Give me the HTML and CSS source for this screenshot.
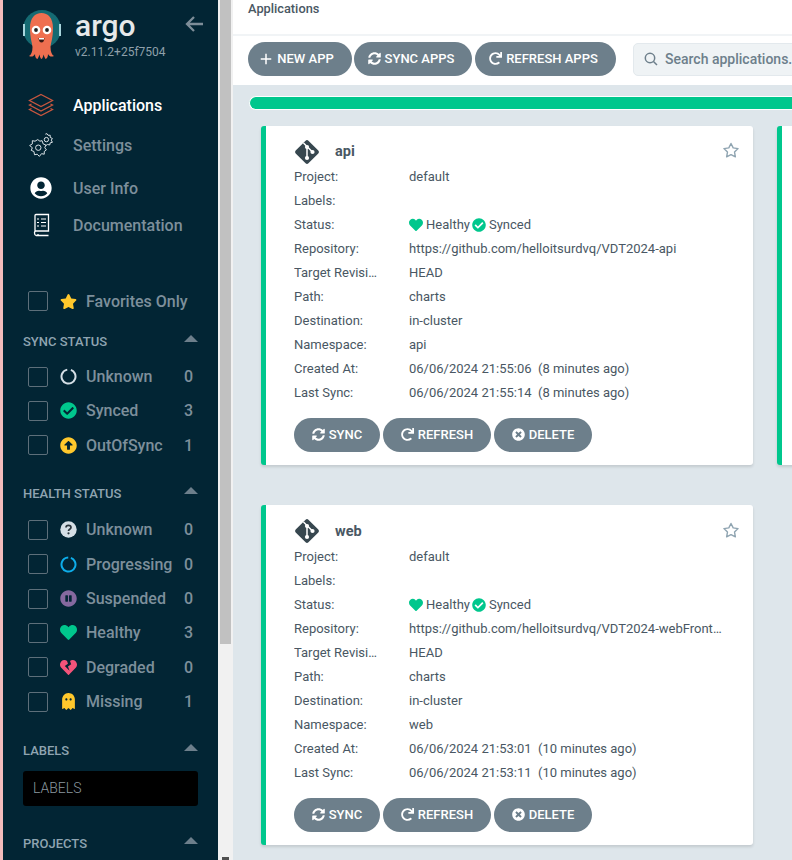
FILE: index.html
```html
<!DOCTYPE html>
<html lang="en">
<head>
  <meta charset="UTF-8">
  <meta name="viewport" content="width=device-width, initial-scale=1">
  <title>Applications - Argo CD</title>
  <link rel="stylesheet" href="styles.css">
</head>
<body>
  <svg class="sprite" xmlns="http://www.w3.org/2000/svg">
    <symbol id="i-heart" viewBox="0 0 512 512"><path d="M462.3 62.6C407.5 15.9 326 24.3 275.7 76.2L256 96.5l-19.7-20.3C186.1 24.3 104.5 15.9 49.7 62.6c-62.8 53.6-66.1 149.8-9.9 207.9l193.5 199.8c12.5 12.9 32.8 12.9 45.3 0l193.5-199.8c56.3-58.1 53-154.3-9.8-207.9z"/></symbol>
    <symbol id="i-star" viewBox="0 0 576 512"><path d="M259.3 17.8L194 150.2 47.9 171.5c-26.2 3.8-36.7 36.1-17.7 54.6l105.7 103-25 145.5c-4.5 26.3 23.2 46 46.4 33.7L288 439.6l130.7 68.7c23.2 12.2 50.9-7.4 46.4-33.7l-25-145.5 105.7-103c19-18.5 8.5-50.8-17.7-54.6L382 150.2 316.7 17.8c-11.7-23.6-45.6-23.9-57.4 0z"/></symbol>
    <symbol id="i-check" viewBox="0 0 512 512"><path d="M504 256c0 136.967-111.033 248-248 248S8 392.967 8 256 119.033 8 256 8s248 111.033 248 248zM227.314 387.314l184-184c6.248-6.248 6.248-16.379 0-22.627l-22.627-22.627c-6.248-6.249-16.379-6.25-22.628 0L216 308.118l-70.059-70.059c-6.248-6.248-16.379-6.248-22.628 0l-22.627 22.627c-6.248 6.248-6.248 16.379 0 22.627l104 104c6.249 6.249 16.379 6.249 22.628.001z"/></symbol>
    <symbol id="i-up" viewBox="0 0 512 512"><path d="M8 256C8 119 119 8 256 8s248 111 248 248-111 248-248 248S8 393 8 256zm292 116V256h70.9c10.7 0 16.1-13 8.5-20.5L264.5 121.2c-4.7-4.7-12.2-4.7-16.9 0l-115 114.3c-7.6 7.6-2.2 20.5 8.5 20.5H212v116c0 6.6 5.4 12 12 12h64c6.6 0 12-5.4 12-12z"/></symbol>
    <symbol id="i-question" viewBox="0 0 17 17">
      <circle cx="8.500" cy="8.500" r="8.200" fill="#d5dfe6"/>
      <path d="M6 6.600C6 5 7.200 4.300 8.500 4.300S11 5.100 11 6.500C11 8.300 8.500 8.300 8.500 10" fill="none" stroke="#29343b" stroke-width="1.700"/>
      <circle cx="8.500" cy="12.300" r="1.100" fill="#29343b"/>
    </symbol>
    <symbol id="i-pause" viewBox="0 0 512 512"><path d="M256 8C119 8 8 119 8 256s111 248 248 248 248-111 248-248S393 8 256 8zm-16 328c0 8.800-7.200 16-16 16h-48c-8.800 0-16-7.200-16-16V176c0-8.800 7.200-16 16-16h48c8.800 0 16 7.200 16 16v160zm112 0c0 8.800-7.200 16-16 16h-48c-8.800 0-16-7.200-16-16V176c0-8.800 7.200-16 16-16h48c8.800 0 16 7.200 16 16v160z"/></symbol>
    <symbol id="i-broken" viewBox="0 0 512 512"><path d="M473.7 73.8l-2.4-2.5c-46-47-118-51.7-169.6-14.8L336 159.9l-96 64 48 128-144-144 96-64-28.6-86.5C159.7 19.6 87 24 40.7 71.4l-2.4 2.4C-10.4 123.6-12.5 202.9 31 256l212.1 218.6c7.1 7.3 18.6 7.3 25.7 0L481 255.9c43.5-53 41.4-132.3-7.3-182.1z"/></symbol>
    <symbol id="i-ghost" viewBox="0 0 384 512"><path d="M186.1.09C81.01 3.24 0 94.92 0 200.05v263.92c0 14.26 17.23 21.39 27.31 11.31l24.92-18.53c6.66-4.95 16-3.99 21.51 2.21l42.95 48.35c6.25 6.25 16.38 6.25 22.63 0l40.72-45.85c6.37-7.17 17.56-7.17 23.92 0l40.72 45.85c6.25 6.25 16.38 6.25 22.63 0l42.95-48.35c5.51-6.2 14.85-7.17 21.51-2.21l24.92 18.53c10.08 10.08 27.31 2.95 27.31-11.31V192C384 84 294.83-3.17 186.1.09zM128 224c-17.67 0-32-14.33-32-32s14.33-32 32-32 32 14.33 32 32-14.33 32-32 32zm128 0c-17.67 0-32-14.33-32-32s14.33-32 32-32 32 14.33 32 32-14.33 32-32 32z"/></symbol>
    <symbol id="i-sync" viewBox="0 0 512 512"><path d="M370.72 133.28C339.458 104.008 298.888 87.962 255.848 88c-77.458.068-144.328 53.178-162.791 126.85-1.344 5.363-6.122 9.15-11.651 9.15H24.103c-7.498 0-13.194-6.807-11.807-14.176C33.933 94.924 134.813 8 256 8c66.448 0 126.791 26.136 171.315 68.685L463.03 40.97C478.149 25.851 504 36.559 504 57.941V192c0 13.255-10.745 24-24 24H345.941c-21.382 0-32.09-25.851-16.971-40.971l41.75-41.749zM32 296h134.059c21.382 0 32.09 25.851 16.971 40.971l-41.75 41.75c31.262 29.273 71.835 45.319 114.876 45.28 77.418-.07 144.315-53.144 162.787-126.849 1.344-5.363 6.122-9.15 11.651-9.15h57.304c7.498 0 13.194 6.807 11.807 14.176C478.067 417.076 377.187 504 256 504c-66.448 0-126.791-26.136-171.315-68.685L48.97 471.03C33.851 486.149 8 475.441 8 454.059V320c0-13.255 10.745-24 24-24z"/></symbol>
    <symbol id="i-redo" viewBox="0 0 512 512"><path d="M500.33 0h-47.41a12 12 0 0 0-12 12.57l4 82.76A247.42 247.42 0 0 0 256 8C119.34 8 7.9 119.53 8 256.19 8.1 393.07 119.1 504 256 504a247.1 247.1 0 0 0 166.18-63.91 12 12 0 0 0 .48-17.43l-34-34a12 12 0 0 0-16.38-.55A176 176 0 1 1 402.1 157.8l-101.53-4.87a12 12 0 0 0-12.57 12v47.41a12 12 0 0 0 12 12h200.33a12 12 0 0 0 12-12V12a12 12 0 0 0-12-12z"/></symbol>
    <symbol id="i-times" viewBox="0 0 512 512"><path d="M256 8C119 8 8 119 8 256s111 248 248 248 248-111 248-248S393 8 256 8zm121.6 313.1c4.7 4.7 4.7 12.3 0 17L338 377.6c-4.7 4.7-12.3 4.7-17 0L256 312l-65.1 65.6c-4.7 4.7-12.3 4.7-17 0L134.4 338c-4.7-4.7-4.7-12.3 0-17l65.6-65-65.6-65.1c-4.7-4.7-4.7-12.3 0-17l39.6-39.6c4.7-4.7 12.3-4.7 17 0l65 65.7 65.1-65.6c4.7-4.7 12.3-4.7 17 0l39.6 39.6c4.7 4.7 4.7 12.3 0 17L312 256l65.6 65.1z"/></symbol>
    <symbol id="i-plus" viewBox="0 0 24 24"><path d="M12 1.500V22.500M1.500 12H22.500" fill="none" stroke="#fff" stroke-width="3"/></symbol>
    <symbol id="i-user" viewBox="0 0 496 512"><path d="M248 8C111 8 0 119 0 256s111 248 248 248 248-111 248-248S385 8 248 8zm0 96c48.6 0 88 39.4 88 88s-39.4 88-88 88-88-39.4-88-88 39.4-88 88-88zm0 344c-58.7 0-111.3-26.6-146.5-68.2 18.8-35.4 55.6-59.8 98.5-59.8 2.4 0 4.8.4 7.1 1.1 13 4.2 26.6 6.9 40.9 6.9 14.3 0 28-2.7 40.9-6.9 2.3-.7 4.7-1.1 7.1-1.1 42.9 0 79.7 24.4 98.5 59.8C359.3 421.4 306.7 448 248 448z"/></symbol>
    <symbol id="i-git" viewBox="0 0 26 26">
      <rect x="4" y="4" width="18" height="18" rx="2" transform="rotate(45 13 13)"/>
      <path d="M9.500 4 L18.500 13 M13 7.500 V19" fill="none" stroke="#fff" stroke-width="1.500"/>
      <circle cx="13" cy="8" r="2.100" fill="#fff"/><circle cx="13" cy="19" r="2.100" fill="#fff"/><circle cx="18.500" cy="13" r="2.100" fill="#fff"/>
    </symbol>
  </svg>

  <div class="app">
    <div class="strip"></div>

    <aside class="sidebar">
      <div class="brand">
        <svg class="brand-logo" viewBox="0 0 40 60">
          <circle cx="20" cy="20" r="19" fill="#156a72"/>
          <rect x="1" y="15" width="2" height="12" fill="#a9d6dd"/>
          <rect x="37" y="15" width="2" height="12" fill="#a9d6dd"/>
          <path d="M8 19C8 9 13 4 19.500 4S31 9 31 19C31 29 29 33 28.500 38C28.500 43 30 46 32 47C29 48.500 27 47 26 45C26 48 25 49.500 23.500 50C22.500 48.500 22 47 21.500 45.500C21 48 20.500 49.500 19.500 50C18.500 49.500 18 48 17.500 45.500C17 47 16.500 48.500 15.500 50C14 49.500 13 48 13 45C12 47 10 48.500 7 47C9 46 10.500 43 10.500 38C10 33 8 29 8 19Z" fill="#ef6f50"/>
          <circle cx="14" cy="21" r="4.300" fill="#fff"/><circle cx="25" cy="21" r="4.300" fill="#fff"/>
          <circle cx="14" cy="21" r="1.900" fill="#222"/><circle cx="25" cy="21" r="1.900" fill="#222"/>
          <path d="M16.500 29H22.500Q22 33.500 19.500 33.500T16.500 29Z" fill="#3a1a14"/>
          <path d="M17 29H22V30.500H17Z" fill="#fff"/>
        </svg>
        <div class="brand-text">
          <div class="brand-name">argo</div>
          <div class="brand-version">v2.11.2+25f7504</div>
        </div>
        <svg class="brand-back" viewBox="0 0 18 16"><path d="M18 8H2M9 1L2 8l7 7" fill="none" stroke="#7d8d98" stroke-width="2.300"/></svg>
      </div>

      <nav class="nav">
        <a class="nav-item nav-item--active">
          <span class="nav-icon">
            <svg width="26" height="24" viewBox="0 0 26 24" fill="none" stroke="#c9573f" stroke-width="1.300"><path d="M13 1.500L24.500 7.500L13 13.500L1.500 7.500Z"/><path d="M3.500 11L1.500 12L13 18L24.500 12L22.500 11"/><path d="M3.500 15.500L1.500 16.500L13 22.500L24.500 16.500L22.500 15.500"/></svg>
          </span>
          Applications
        </a>
        <a class="nav-item">
          <span class="nav-icon">
            <svg width="26" height="26" viewBox="0 0 24 24" fill="none" stroke="#dfe6ea" stroke-width=".9"><path d="M9 7L11 8.500L13 8L14 11L16.500 12L15.500 14.500L17 16.500L15 18L15 20.500L12.500 20L10.500 22.500L8.500 20.500L6 21L5.500 18L3 17L4 14.500L1.500 12.500L4 11L4 8L6.500 8.500Z"/><circle cx="9.500" cy="14.500" r="2.500"/><path d="M16 2L17.500 1.500L18.500 3L20.500 3L20.500 5L22.500 6L21.500 7.500L22.500 9.500L20.500 10L20 12L18 11.500L16.500 12.500"/><circle cx="17" cy="7" r="2"/></svg>
          </span>
          Settings
        </a>
        <a class="nav-item nav-item--user">
          <span class="nav-icon"><svg class="ico-white" width="22" height="22"><use href="#i-user"/></svg></span>
          User Info
        </a>
        <a class="nav-item nav-item--docs">
          <span class="nav-icon">
            <svg width="17" height="24" viewBox="0 0 17 24" fill="none" stroke="#fff" stroke-width="1.300"><path d="M2 19V2.500Q2 1.500 3 1.500H15.500V18H3Q1.500 18 1.500 20T3 22.500H15.500M5 21V23"/><path d="M8 6H13M8 9.500H13M8 13H13M4 6H6M4 9.500H6M4 13H6" stroke-width="1.100"/></svg>
          </span>
          Documentation
        </a>
      </nav>

      <label class="filter filter--favorites">
        <span class="checkbox"></span>
        <svg class="filter-icon ico-yellow"><use href="#i-star"/></svg>
        <span class="filter-name">Favorites Only</span>
      </label>

      <div class="section-title section-title--first">SYNC STATUS<span class="caret"></span></div>
      <div class="filters">
        <label class="filter">
          <span class="checkbox"></span>
          <svg class="filter-icon" viewBox="0 0 17 17" fill="none"><circle cx="8.500" cy="8.500" r="7" stroke="#d5dfe6" stroke-width="2" stroke-dasharray="40 4" transform="rotate(-70 8.500 8.500)"/></svg>
          <span class="filter-name">Unknown</span><span class="filter-count">0</span>
        </label>
        <label class="filter">
          <span class="checkbox"></span>
          <svg class="filter-icon ico-green"><use href="#i-check"/></svg>
          <span class="filter-name">Synced</span><span class="filter-count">3</span>
        </label>
        <label class="filter">
          <span class="checkbox"></span>
          <svg class="filter-icon ico-yellow"><use href="#i-up"/></svg>
          <span class="filter-name">OutOfSync</span><span class="filter-count">1</span>
        </label>
      </div>

      <div class="section-title">HEALTH STATUS<span class="caret"></span></div>
      <div class="filters">
        <label class="filter">
          <span class="checkbox"></span>
          <svg class="filter-icon"><use href="#i-question"/></svg>
          <span class="filter-name">Unknown</span><span class="filter-count">0</span>
        </label>
        <label class="filter">
          <span class="checkbox"></span>
          <svg class="filter-icon" viewBox="0 0 17 17" fill="none"><circle cx="8.500" cy="8.500" r="7" stroke="#0dadea" stroke-width="2" stroke-dasharray="41 3" transform="rotate(-70 8.500 8.500)"/></svg>
          <span class="filter-name">Progressing</span><span class="filter-count">0</span>
        </label>
        <label class="filter">
          <span class="checkbox"></span>
          <svg class="filter-icon ico-purple"><use href="#i-pause"/></svg>
          <span class="filter-name">Suspended</span><span class="filter-count">0</span>
        </label>
        <label class="filter">
          <span class="checkbox"></span>
          <svg class="filter-icon ico-green"><use href="#i-heart"/></svg>
          <span class="filter-name">Healthy</span><span class="filter-count">3</span>
        </label>
        <label class="filter">
          <span class="checkbox"></span>
          <svg class="filter-icon ico-red"><use href="#i-broken"/></svg>
          <span class="filter-name">Degraded</span><span class="filter-count">0</span>
        </label>
        <label class="filter">
          <span class="checkbox"></span>
          <svg class="filter-icon ico-yellow"><use href="#i-ghost"/></svg>
          <span class="filter-name">Missing</span><span class="filter-count">1</span>
        </label>
      </div>

      <div class="section-title section-title--labels">LABELS<span class="caret"></span></div>
      <div class="labels-input">LABELS</div>
      <div class="section-title section-title--projects">PROJECTS<span class="caret"></span></div>
    </aside>

    <div class="scrollbar"><div class="scrollbar-thumb"></div><div class="scrollbar-arrow"></div></div>

    <main class="main">
      <div class="page-title">Applications</div>
      <div class="toolbar">
        <button class="btn btn--new"><svg class="btn-icon"><use href="#i-plus"/></svg>NEW APP</button>
        <button class="btn btn--sync"><svg class="btn-icon"><use href="#i-sync"/></svg>SYNC APPS</button>
        <button class="btn btn--refresh"><svg class="btn-icon"><use href="#i-redo"/></svg>REFRESH APPS</button>
        <div class="search">
          <svg width="14" height="14" viewBox="0 0 14 14" fill="none" stroke="#6d7f8b" stroke-width="1.500"><circle cx="6" cy="6" r="4.700"/><path d="M9.500 9.500L13 13"/></svg>
          <span>Search applications...</span>
        </div>
      </div>

      <div class="content">
        <div class="progress"><div class="progress-fill"></div></div>
        <div class="cards">
          <section class="card">
            <header class="card-head">
              <svg class="card-git"><use href="#i-git"/></svg>
              <span class="card-title">api</span>
              <svg class="card-star" viewBox="0 0 576 512"><path d="M288 30L358 172L514 195L401 305L428 460L288 387L148 460L175 305L62 195L218 172Z" fill="none" stroke="#8fa4b1" stroke-width="44" stroke-linejoin="round"/></svg>
            </header>
            <div class="row"><span class="row-label">Project:</span><span class="row-value">default</span></div>
            <div class="row"><span class="row-label">Labels:</span><span class="row-value"></span></div>
            <div class="row"><span class="row-label">Status:</span><span class="row-value status"><svg class="status-icon ico-green"><use href="#i-heart"/></svg>Healthy<svg class="status-icon status-icon--sync ico-green"><use href="#i-check"/></svg>Synced</span></div>
            <div class="row"><span class="row-label">Repository:</span><span class="row-value">https://github.com/helloitsurdvq/VDT2024-api</span></div>
            <div class="row"><span class="row-label">Target Revision:</span><span class="row-value">HEAD</span></div>
            <div class="row"><span class="row-label">Path:</span><span class="row-value">charts</span></div>
            <div class="row"><span class="row-label">Destination:</span><span class="row-value">in-cluster</span></div>
            <div class="row"><span class="row-label">Namespace:</span><span class="row-value">api</span></div>
            <div class="row"><span class="row-label">Created At:</span><span class="row-value">06/06/2024 21:55:06&nbsp; (8 minutes ago)</span></div>
            <div class="row"><span class="row-label">Last Sync:</span><span class="row-value">06/06/2024 21:55:14&nbsp; (8 minutes ago)</span></div>
            <footer class="card-actions">
              <button class="btn btn--small btn--card-sync"><svg class="btn-icon"><use href="#i-sync"/></svg>SYNC</button>
              <button class="btn btn--small btn--card-refresh"><svg class="btn-icon"><use href="#i-redo"/></svg>REFRESH</button>
              <button class="btn btn--small btn--card-delete"><svg class="btn-icon"><use href="#i-times"/></svg>DELETE</button>
            </footer>
          </section>

          <section class="card"></section>

          <section class="card">
            <header class="card-head">
              <svg class="card-git"><use href="#i-git"/></svg>
              <span class="card-title">web</span>
              <svg class="card-star" viewBox="0 0 576 512"><path d="M288 30L358 172L514 195L401 305L428 460L288 387L148 460L175 305L62 195L218 172Z" fill="none" stroke="#8fa4b1" stroke-width="44" stroke-linejoin="round"/></svg>
            </header>
            <div class="row"><span class="row-label">Project:</span><span class="row-value">default</span></div>
            <div class="row"><span class="row-label">Labels:</span><span class="row-value"></span></div>
            <div class="row"><span class="row-label">Status:</span><span class="row-value status"><svg class="status-icon ico-green"><use href="#i-heart"/></svg>Healthy<svg class="status-icon status-icon--sync ico-green"><use href="#i-check"/></svg>Synced</span></div>
            <div class="row"><span class="row-label">Repository:</span><span class="row-value">https://github.com/helloitsurdvq/VDT2024-webFrontend</span></div>
            <div class="row"><span class="row-label">Target Revision:</span><span class="row-value">HEAD</span></div>
            <div class="row"><span class="row-label">Path:</span><span class="row-value">charts</span></div>
            <div class="row"><span class="row-label">Destination:</span><span class="row-value">in-cluster</span></div>
            <div class="row"><span class="row-label">Namespace:</span><span class="row-value">web</span></div>
            <div class="row"><span class="row-label">Created At:</span><span class="row-value">06/06/2024 21:53:01&nbsp; (10 minutes ago)</span></div>
            <div class="row"><span class="row-label">Last Sync:</span><span class="row-value">06/06/2024 21:53:11&nbsp; (10 minutes ago)</span></div>
            <footer class="card-actions">
              <button class="btn btn--small btn--card-sync"><svg class="btn-icon"><use href="#i-sync"/></svg>SYNC</button>
              <button class="btn btn--small btn--card-refresh"><svg class="btn-icon"><use href="#i-redo"/></svg>REFRESH</button>
              <button class="btn btn--small btn--card-delete"><svg class="btn-icon"><use href="#i-times"/></svg>DELETE</button>
            </footer>
          </section>
        </div>
      </div>
    </main>
  </div>
</body>
</html>
```

FILE: styles.css
```css
html, body {
  margin: 0;
  height: 100%;
  overflow: hidden;
}
body {
  font-family: Roboto, "Liberation Sans", sans-serif;
  background: #fff;
}
.sprite {
  display: none;
}
.ico-green { fill: #00c78d; }
.ico-yellow { fill: #ffc82c; }
.ico-purple { fill: #85699f; }
.ico-red { fill: #f4537a; }
.ico-white { fill: #fff; }

.app {
  display: flex;
  height: 860px;
  overflow: hidden;
}
.strip {
  flex: 0 0 3px;
  background: #f4bcbc;
}

/* sidebar */
.sidebar {
  flex: 0 0 215px;
  background: #022534;
  color: #7d8f9b;
  overflow: hidden;
}
.brand {
  display: flex;
  height: 85px;
  box-sizing: border-box;
  padding: 9px 0 0 19px;
}
.brand-logo {
  width: 40px;
  height: 60px;
  margin-right: 13px;
}
.brand-text {
  width: 105px;
}
.brand-name {
  font-size: 30px;
  line-height: 34px;
  font-weight: 500;
  color: #e6e9ea;
}
.brand-version {
  font-size: 12px;
  line-height: 14px;
  color: #8fa0aa;
  margin-top: 2px;
}
.brand-back {
  width: 18px;
  height: 16px;
  margin-top: 7px;
  margin-left: 5px;
}
.nav-item {
  display: flex;
  align-items: center;
  height: 40px;
  font-size: 16px;
  font-weight: 500;
}
.nav-item--active {
  color: #fff;
}
.nav-item--user {
  margin-top: 3px;
  margin-bottom: -3px;
}
.nav-icon {
  flex: 0 0 26px;
  display: flex;
  justify-content: center;
  margin-left: 25px;
  margin-right: 19px;
}
.section-title {
  display: flex;
  justify-content: space-between;
  align-items: center;
  height: 20px;
  margin: 21px 20px 9px 20px;
  font-size: 13px;
  font-weight: 500;
  color: #8fa4b1;
}
.section-title--first {
  margin-top: 13px;
  margin-bottom: 8px;
}
.section-title--labels {
  margin-top: 22px;
  margin-bottom: 10px;
}
.section-title--projects {
  margin-top: 28px;
}
.caret {
  width: 0;
  height: 0;
  border-left: 7px solid transparent;
  border-right: 7px solid transparent;
  border-bottom: 7px solid #6d7f8b;
  margin-bottom: 6px;
}
.filter--favorites {
  margin-top: 39px;
}
.filter {
  display: flex;
  align-items: center;
  height: 34.4px;
  padding-left: 25px;
  font-size: 16px;
  font-weight: 500;
}
.checkbox {
  flex: 0 0 auto;
  width: 20px;
  height: 20px;
  box-sizing: border-box;
  border: 1.5px solid #5d6f7a;
  border-radius: 2px;
  margin-right: 12px;
}
.filter-icon {
  flex: 0 0 17px;
  width: 17px;
  height: 17px;
  margin-right: 9px;
}
.filter-count {
  margin-left: auto;
  margin-right: 25px;
}
.labels-input {
  display: flex;
  align-items: center;
  height: 35px;
  margin: 0 20px;
  padding-left: 10px;
  background: #000;
  border-radius: 3px;
  font-size: 14px;
  font-weight: 300;
  color: #8a979f;
}

/* fake window scrollbar between the two panes */
.scrollbar {
  flex: 0 0 11px;
  padding: 0 2px;
  background: #f1f1f1;
  display: flex;
  flex-direction: column;
}
.scrollbar-thumb {
  height: 644px;
  background: #c1c1c1;
}
.scrollbar-arrow {
  margin: auto auto 0;
  width: 7px;
  height: 3px;
  background: #505050;
}

/* main */
.main {
  flex: 1;
  min-width: 0;
  overflow: hidden;
  background: #fff;
}
.page-title {
  height: 34px;
  padding-left: 15px;
  font-size: 12.8px;
  line-height: 18px;
  font-weight: 500;
  color: #495763;
  border-bottom: 2px solid #f1f4f6;
  box-sizing: content-box;
}
.toolbar {
  display: flex;
  align-items: flex-start;
  height: 49px;
  padding: 6px 0 0 15px;
  box-sizing: border-box;
}
.btn {
  display: flex;
  flex: 0 0 auto;
  align-items: center;
  justify-content: center;
  height: 34px;
  padding: 0 0 1px;
  border: 0;
  border-radius: 17px;
  background: #6d7f8b;
  color: #fff;
  font-family: inherit;
  font-size: 13px;
  font-weight: 500;
  margin-right: 3px;
}
.btn-icon {
  width: 13px;
  height: 13px;
  fill: #fff;
  margin-right: 4px;
}
.btn--new {
  width: 104px;
  margin-right: 2px;
  padding-right: 6px;
}
.btn--new .btn-icon {
  width: 12px;
  height: 12px;
  margin-right: 5px;
}
.btn--sync {
  width: 118px;
  padding-right: 4px;
}
.btn--refresh {
  width: 141px;
  padding-right: 4px;
}
.btn--card-sync { width: 86px; }
.btn--card-refresh { width: 108px; }
.btn--card-delete { width: 98px; }
.search {
  display: flex;
  flex: 0 0 auto;
  align-items: center;
  gap: 7px;
  width: 220px;
  height: 33px;
  margin-left: 14px;
  margin-top: 1px;
  padding: 0 0 1px 10px;
  background: #eff3f5;
  border: 1px solid #e3e9ed;
  border-radius: 5px;
  box-sizing: border-box;
  font-size: 14px;
  font-weight: 500;
  color: #6d7f8b;
  white-space: nowrap;
}
.content {
  height: 775px;
  background: #dee6eb;
  padding-top: 11px;
  box-sizing: border-box;
}
.progress {
  height: 14px;
  margin-left: 16px;
  box-sizing: border-box;
  border: 1.5px solid #fff;
  border-right: 0;
  border-radius: 7px 0 0 7px;
  background: #00c78d;
}
.cards {
  display: grid;
  grid-template-columns: 492px 492px;
  gap: 40px 24px;
  margin: 15.6px 0 0 28px;
}
.card {
  height: 339.6px;
  box-sizing: border-box;
  padding: 13.8px 28px 0;
  background: #fff;
  border-left: 5px solid #00c78d;
  border-radius: 3px;
  box-shadow: 0 2px 3px rgba(0, 0, 0, .12);
  font-size: 13px;
  color: #495763;
}
.card-head {
  display: flex;
  align-items: center;
  height: 25px;
  margin-bottom: 1px;
}
.card-git {
  width: 26px;
  height: 26px;
  fill: #37474f;
  margin-right: 15px;
}
.card-title {
  font-size: 14.5px;
  font-weight: 700;
}
.card-star {
  width: 18px;
  height: 17px;
  margin-left: auto;
  margin-right: -15px;
  margin-top: -2px;
}
.row {
  display: flex;
  height: 24px;
  line-height: 24px;
}
.row-label {
  flex: 0 0 85px;
  margin-right: 30px;
  overflow: hidden;
  text-overflow: ellipsis;
  white-space: nowrap;
}
.row-value {
  flex: 0 0 313px;
  overflow: hidden;
  text-overflow: ellipsis;
  white-space: nowrap;
}
.status {
  display: flex;
  align-items: center;
}
.status-icon {
  width: 14px;
  height: 14px;
  margin-right: 3px;
}
.status-icon--sync {
  margin-left: 2px;
}
.card-actions {
  display: flex;
  margin-top: 13px;
}
```
